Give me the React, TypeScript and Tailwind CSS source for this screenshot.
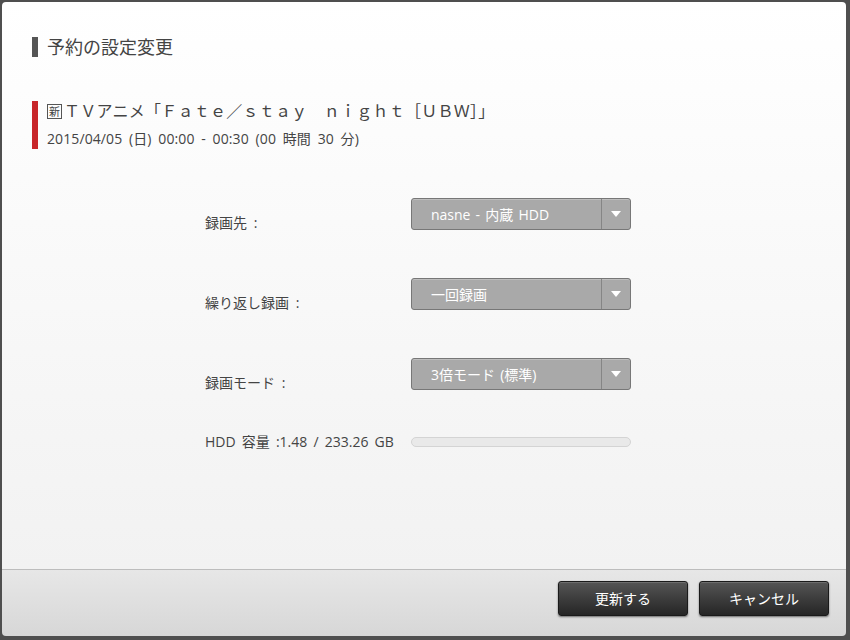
import React from "react";

const font = "font-['Open_Sans','Noto_Sans_CJK_JP',sans-serif]";

function Select({ value }: { value: string }) {
  return (
    <div className="flex h-[32px] w-[220px] items-stretch rounded-[3px] border border-[#777] bg-[#a9a9a9] shadow-[inset_0_1px_0_rgba(255,255,255,0.25)]">
      <div className="flex flex-1 items-center pl-[19px] text-[14px] text-white [word-spacing:1.5px]">{value}</div>
      <div className="flex w-[29px] items-center justify-center border-l border-[#858585]">
        <svg width="10" height="7" viewBox="0 0 10 7">
          <path d="M0 0 L10 0 L5 6 Z" fill="#fff" />
        </svg>
      </div>
    </div>
  );
}

function Row({ label, value }: { label: string; value: string }) {
  return (
    <div className="flex h-[32px] items-start">
      <div className="mt-[15px] h-[20px] w-[206px] text-[14px] leading-[20px] text-[#444] [word-spacing:3px]">{label}</div>
      <Select value={value} />
    </div>
  );
}

function Btn({ children }: { children: React.ReactNode }) {
  return (
    <button className="flex h-[35px] w-[130px] items-center justify-center rounded-[3px] border border-[#1a1a1a] bg-gradient-to-b from-[#555] to-[#262626] text-[14px] text-white shadow-[0_1px_2px_rgba(0,0,0,0.5),inset_0_1px_0_rgba(255,255,255,0.15)]">
      {children}
    </button>
  );
}

export default function App() {
  return (
    <div className={`h-[640px] w-[850px] bg-[#4f4f4f] p-[2px] pr-[4px] pb-[4px] ${font}`}>
      <div className="flex h-full w-full flex-col overflow-hidden rounded-[4px]">
        <div className="flex flex-1 flex-col bg-gradient-to-b from-white to-[#f2f2f2] pl-[30px] pt-[35px]">
          <div className="flex items-center">
            <div className="h-[20px] w-[6px] bg-[#555]" />
            <div className="ml-[9px] text-[18px] leading-[20px] text-[#444]">予約の設定変更</div>
          </div>
          <div className="mt-[44px] flex">
            <div className="h-[48px] w-[6px] bg-[#c8262a]" />
            <div className="ml-[9px] flex flex-col">
              <div className="flex h-[20px] items-center text-[16px] leading-[20px] text-[#444]">
                <span className="mr-[2px] flex h-[15px] w-[15px] items-center justify-center border border-[#555] text-[11px] leading-none">新</span>
                <span className="tracking-[0.25px]">ＴＶアニメ「Ｆａｔｅ／ｓｔａｙ　ｎｉｇｈｔ［ＵＢＷ］」</span>
              </div>
              <div className="mt-[8px] text-[14px] leading-[20px] text-[#444] tracking-[0.1px] [word-spacing:3px]">2015/04/05 (日) 00:00 - 00:30 (00 時間 30 分)</div>
            </div>
          </div>
          <div className="ml-[173px] mt-[49px] flex flex-col gap-[48px]">
            <Row label="録画先 :" value="nasne - 内蔵 HDD" />
            <Row label="繰り返し録画 :" value="一回録画" />
            <Row label="録画モード :" value="3倍モード (標準)" />
          </div>
          <div className="ml-[173px] mt-[42px] flex h-[20px] items-center">
            <div className="w-[206px] text-[14px] leading-[20px] text-[#444] [word-spacing:2.5px]">HDD 容量 :1.48 / 233.26 GB</div>
            <div className="h-[10px] w-[220px] rounded-full border border-[#d4d4d4] bg-[#e9e9e9]" />
          </div>
        </div>
        <div className="flex h-[67px] justify-end gap-[11px] border-t border-[#bdbdbd] bg-gradient-to-b from-[#e7e7e7] to-[#d7d7d7] pr-[17px] pt-[11px]">
          <Btn>更新する</Btn>
          <Btn>キャンセル</Btn>
        </div>
      </div>
    </div>
  );
}
